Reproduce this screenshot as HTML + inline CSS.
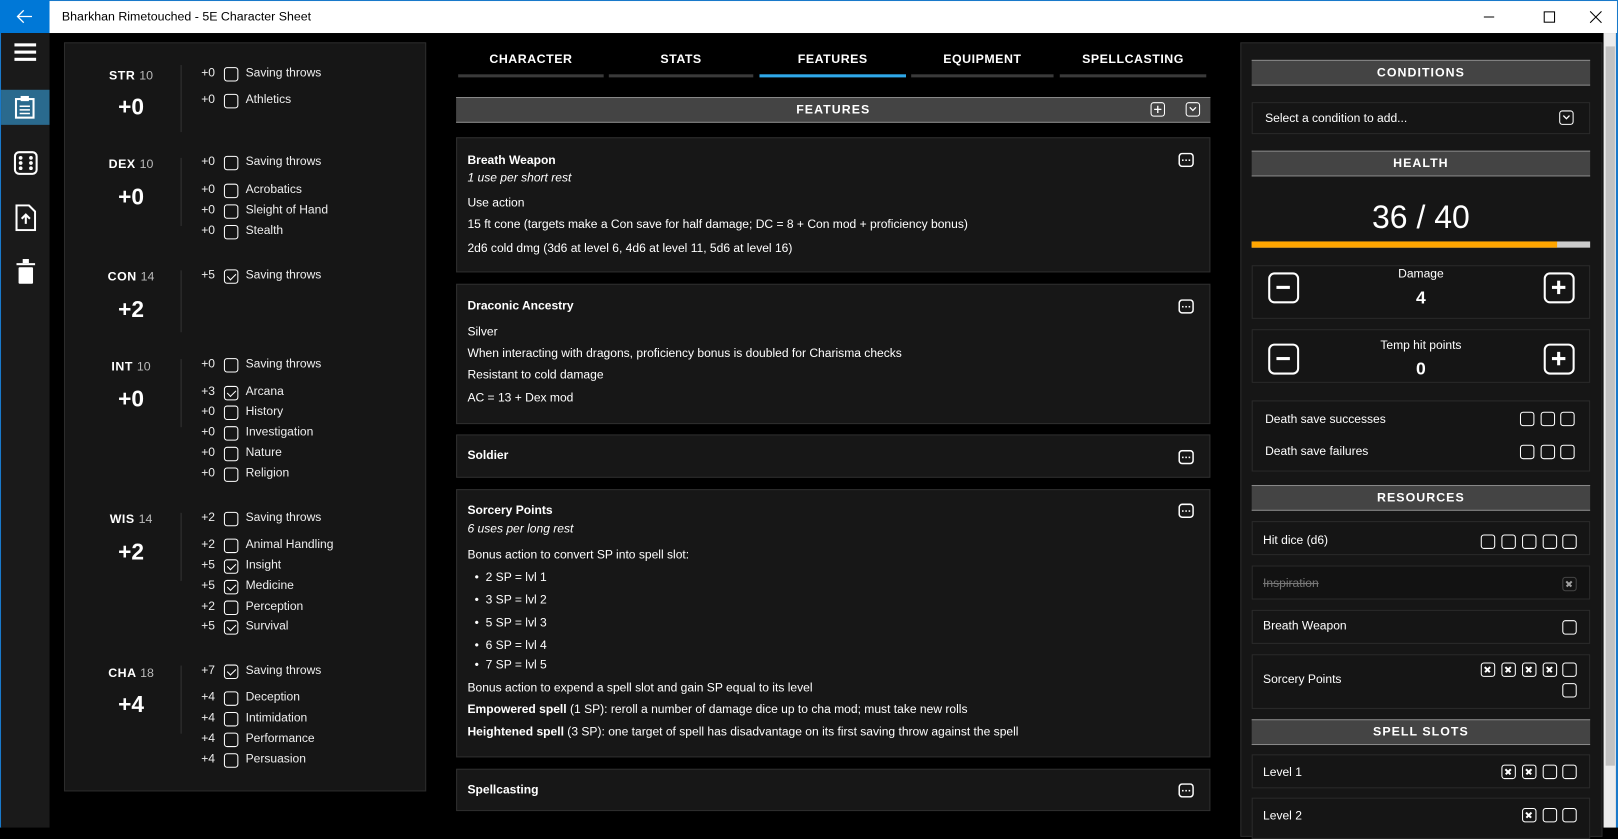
<!DOCTYPE html>
<html><head><meta charset="utf-8"><style>
*{margin:0;padding:0;box-sizing:border-box}
html,body{width:1618px;height:827px;background:#000;overflow:hidden}
#w{position:absolute;left:0;top:0;width:1568px;height:802px;transform:scale(1.03189);transform-origin:0 0;font-family:"Liberation Sans",sans-serif;color:#fff;font-size:11.7px}
.a{position:absolute}
.t{position:absolute;white-space:nowrap;line-height:14px}
.cb{position:absolute;width:14px;height:14px;border:1.5px solid #fff;border-radius:3px}
.cb.c::after{content:"";position:absolute;left:3.5px;top:0.5px;width:3.5px;height:7px;border:solid #fff;border-width:0 1.5px 1.5px 0;transform:rotate(45deg)}
.cb.x::before,.cb.x::after{content:"";position:absolute;left:2px;top:4.7px;width:7px;height:1.5px;background:#fff;transform:rotate(45deg)}
.cb.x::after{transform:rotate(-45deg)}
.panel{position:absolute;background:#161616;border:1px solid #2c2c2c}
.card{position:absolute;background:#171717;border:1px solid #2e2e2e;left:442px;width:731px}
.hdr{position:absolute;background:#444;border-top:1px solid #888;border-bottom:1px solid #888;text-align:center;font-weight:bold;font-size:12px;letter-spacing:1px;line-height:22px}
.box{position:absolute;left:1213px;width:328px;border:1px solid #2a2a2a;background:#151515}
.ab{font-weight:bold;font-size:12px;letter-spacing:.5px;width:100px;left:77px;text-align:center}
.ab span{font-weight:normal;color:#bbb;letter-spacing:0}
.mod{font-size:22px;font-weight:bold;line-height:26px;width:100px;left:77px;text-align:center}
.sk{color:#eee}
.tab{position:absolute;top:50px;text-align:center;font-weight:bold;font-size:12px;letter-spacing:.5px}
.tab i{position:absolute;left:0;right:0;top:22px;height:3px;background:#3a3a3a}
.pm{position:absolute;width:30px;height:30px;border:2.5px solid #fff;border-radius:6px}
.pm::before{content:"";position:absolute;left:6px;top:11px;width:13px;height:3px;background:#fff}
.pm.p::after{content:"";position:absolute;left:11px;top:6px;width:3px;height:13px;background:#fff}
</style></head><body><div id="w">
<div class="a" style="left:0;top:0;width:1568px;height:32px;background:#fff;border:1px solid #1979ca;border-bottom:none"></div>
<div class="a" style="left:0;top:0;width:48px;height:32px;background:#0078d7"></div>
<svg class="a" style="left:16px;top:9px" width="16" height="14"><path d="M1 7H15M7 1L1 7L7 13" stroke="#fff" stroke-width="1.3" fill="none"/></svg>
<div class="t" style="left:60px;top:9px;color:#000;font-size:12px">Bharkhan Rimetouched - 5E Character Sheet</div>
<svg class="a" style="left:1436px;top:10px" width="130" height="14"><path d="M2 6.5H12" stroke="#000"/><rect x="60.5" y="1.5" width="10" height="10" stroke="#000" fill="none"/><path d="M105 1L116 12M116 1L105 12" stroke="#000"/></svg>
<div class="a" style="left:0;top:32px;width:2px;height:770px;background:#1979ca"></div>
<div class="a" style="left:1566px;top:32px;width:2px;height:770px;background:#1979ca"></div>
<div class="a" style="left:1px;top:32px;width:47px;height:770px;background:#1a1a1a"></div>
<div class="a" style="left:14px;top:42px;width:21px;height:3px;background:#fff;box-shadow:0 7px 0 #fff,0 14px 0 #fff"></div>
<div class="a" style="left:1px;top:87px;width:47px;height:34px;background:#2a6a8e"></div>
<svg class="a" style="left:13px;top:92px" width="22" height="24"><rect x="2.5" y="4" width="17" height="18" stroke="#fff" stroke-width="2" fill="none"/><rect x="7" y="1" width="8" height="5" fill="#fff"/><path d="M6 11H16M6 14.5H16M6 18H16" stroke="#fff" stroke-width="1.5"/></svg>
<svg class="a" style="left:13px;top:146px" width="24" height="24"><rect x="1.5" y="1.5" width="21" height="21" rx="4" stroke="#fff" stroke-width="2" fill="none"/><g fill="#fff"><circle cx="7" cy="7" r="1.8"/><circle cx="17" cy="7" r="1.8"/><circle cx="7" cy="12" r="1.8"/><circle cx="17" cy="12" r="1.8"/><circle cx="7" cy="17" r="1.8"/><circle cx="17" cy="17" r="1.8"/></g></svg>
<svg class="a" style="left:15px;top:198px" width="20" height="26"><path d="M1 1H13L19 7V25H1Z" stroke="#fff" stroke-width="2" fill="none"/><path d="M10 19V10M6 14L10 10L14 14" stroke="#fff" stroke-width="2" fill="none"/></svg>
<svg class="a" style="left:14px;top:250px" width="22" height="26"><rect x="2" y="5" width="18" height="2" fill="#fff"/><rect x="8" y="1" width="6" height="4" fill="#fff"/><rect x="4" y="9" width="14" height="16" rx="1" fill="#fff"/></svg>
<div class="panel" style="left:62px;top:41px;width:351px;height:726px"></div>
<div class="a" style="left:175px;top:63px;width:1px;height:65px;background:#333"></div>
<div class="a" style="left:175px;top:153px;width:1px;height:66px;background:#333"></div>
<div class="a" style="left:175px;top:262px;width:1px;height:60px;background:#333"></div>
<div class="a" style="left:175px;top:348px;width:1px;height:66px;background:#333"></div>
<div class="a" style="left:175px;top:497px;width:1px;height:66px;background:#333"></div>
<div class="a" style="left:175px;top:645px;width:1px;height:66px;background:#333"></div>
<div class="t ab" style="top:66px">STR <span>10</span></div><div class="t mod" style="top:91px">+0</div>
<div class="t ab" style="top:152px">DEX <span>10</span></div><div class="t mod" style="top:178px">+0</div>
<div class="t ab" style="top:261px">CON <span>14</span></div><div class="t mod" style="top:287px">+2</div>
<div class="t ab" style="top:348px">INT <span>10</span></div><div class="t mod" style="top:374px">+0</div>
<div class="t ab" style="top:496px">WIS <span>14</span></div><div class="t mod" style="top:522px">+2</div>
<div class="t ab" style="top:645px">CHA <span>18</span></div><div class="t mod" style="top:670px">+4</div>
<div id="sk"></div>
<script>
var S=[[71,'+0',0,'Saving throws'],[97,'+0',0,'Athletics'],[157,'+0',0,'Saving throws'],[184,'+0',0,'Acrobatics'],[204,'+0',0,'Sleight of Hand'],[224,'+0',0,'Stealth'],[267,'+5',1,'Saving throws'],[353,'+0',0,'Saving throws'],[380,'+3',1,'Arcana'],[399,'+0',0,'History'],[419,'+0',0,'Investigation'],[439,'+0',0,'Nature'],[459,'+0',0,'Religion'],[502,'+2',0,'Saving throws'],[528,'+2',0,'Animal Handling'],[548,'+5',1,'Insight'],[568,'+5',1,'Medicine'],[588,'+2',0,'Perception'],[607,'+5',1,'Survival'],[650,'+7',1,'Saving throws'],[676,'+4',0,'Deception'],[696,'+4',0,'Intimidation'],[716,'+4',0,'Performance'],[736,'+4',0,'Persuasion']];
var h='';S.forEach(function(s){h+='<div class="t sk" style="left:195px;top:'+(s[0]-7)+'px">'+s[1]+'</div><div class="cb'+(s[2]?' c':'')+'" style="left:217px;top:'+(s[0]-6)+'px"></div><div class="t sk" style="left:238px;top:'+(s[0]-7)+'px">'+s[3]+'</div>';});
document.getElementById('sk').outerHTML=h;
</script>
<div class="tab" style="left:444px;width:141px">CHARACTER<i></i></div>
<div class="tab" style="left:590px;width:140px">STATS<i></i></div>
<div class="tab" style="left:736px;width:142px">FEATURES<i style="background:#2fa8e8"></i></div>
<div class="tab" style="left:883px;width:138px">EQUIPMENT<i></i></div>
<div class="tab" style="left:1027px;width:142px">SPELLCASTING<i></i></div>
<div class="hdr" style="left:442px;top:94px;width:731px;height:25px">FEATURES</div>
<div class="cb" style="left:1115px;top:99px"></div><svg class="a" style="left:1115px;top:99px" width="14" height="14"><path d="M7 3.5V10.5M3.5 7H10.5" stroke="#fff" stroke-width="1.3"/></svg>
<div class="cb" style="left:1149px;top:99px"></div><svg class="a" style="left:1152px;top:103px" width="8" height="6"><path d="M1 1L4 4L7 1" stroke="#fff" stroke-width="1.3" fill="none"/></svg>
<div class="card" style="top:133px;height:131px"></div>
<div class="t" style="left:453px;top:149px;font-weight:bold">Breath Weapon</div>
<div class="t" style="left:453px;top:166px;font-style:italic">1 use per short rest</div>
<div class="t" style="left:453px;top:190px">Use action</div>
<div class="t" style="left:453px;top:211px">15 ft cone (targets make a Con save for half damage; DC = 8 + Con mod + proficiency bonus)</div>
<div class="t" style="left:453px;top:234px">2d6 cold dmg (3d6 at level 6, 4d6 at level 11, 5d6 at level 16)</div>
<div class="card" style="top:275px;height:136px"></div>
<div class="t" style="left:453px;top:290px;font-weight:bold">Draconic Ancestry</div>
<div class="t" style="left:453px;top:315px">Silver</div>
<div class="t" style="left:453px;top:336px">When interacting with dragons, proficiency bonus is doubled for Charisma checks</div>
<div class="t" style="left:453px;top:357px">Resistant to cold damage</div>
<div class="t" style="left:453px;top:379px">AC = 13 + Dex mod</div>
<div class="card" style="top:421px;height:42px"></div>
<div class="t" style="left:453px;top:435px;font-weight:bold">Soldier</div>
<div class="card" style="top:474px;height:260px"></div>
<div class="t" style="left:453px;top:488px;font-weight:bold">Sorcery Points</div>
<div class="t" style="left:453px;top:506px;font-style:italic">6 uses per long rest</div>
<div class="t" style="left:453px;top:531px">Bonus action to convert SP into spell slot:</div>
<div class="t" style="left:460px;top:553px">•&nbsp; 2 SP = lvl 1</div>
<div class="t" style="left:460px;top:575px">•&nbsp; 3 SP = lvl 2</div>
<div class="t" style="left:460px;top:597px">•&nbsp; 5 SP = lvl 3</div>
<div class="t" style="left:460px;top:619px">•&nbsp; 6 SP = lvl 4</div>
<div class="t" style="left:460px;top:638px">•&nbsp; 7 SP = lvl 5</div>
<div class="t" style="left:453px;top:660px">Bonus action to expend a spell slot and gain SP equal to its level</div>
<div class="t" style="left:453px;top:681px"><b>Empowered spell</b> (1 SP): reroll a number of damage dice up to cha mod; must take new rolls</div>
<div class="t" style="left:453px;top:703px"><b>Heightened spell</b> (3 SP): one target of spell has disadvantage on its first saving throw against the spell</div>
<div class="card" style="top:745px;height:41px"></div>
<div class="t" style="left:453px;top:759px;font-weight:bold">Spellcasting</div>
<div id="el"></div>
<script>
var h='';[148,290,436,488,759].forEach(function(y){h+='<svg class="a" style="left:1142px;top:'+y+'px" width="15" height="14"><rect x="0.75" y="0.75" width="13.5" height="12.5" rx="3" stroke="#fff" stroke-width="1.5" fill="none"/><g fill="#fff"><rect x="3.5" y="6.5" width="1.5" height="1.5"/><rect x="6.7" y="6.5" width="1.5" height="1.5"/><rect x="9.9" y="6.5" width="1.5" height="1.5"/></g></svg>';});
document.getElementById('el').outerHTML=h;
</script>
<div class="panel" style="left:1202px;top:41px;width:351px;height:770px"></div>
<div class="hdr" style="left:1213px;top:58px;width:328px;height:25px">CONDITIONS</div>
<div class="box" style="top:99px;height:31px"></div>
<div class="t" style="left:1226px;top:108px">Select a condition to add...</div>
<div class="cb" style="left:1511px;top:107px"></div><svg class="a" style="left:1514px;top:111px" width="8" height="6"><path d="M1 1L4 4L7 1" stroke="#fff" stroke-width="1.3" fill="none"/></svg>
<div class="hdr" style="left:1213px;top:146px;width:328px;height:25px">HEALTH</div>
<div class="t" style="left:1213px;width:328px;text-align:center;top:194px;font-size:31px;line-height:34px">36 / 40</div>
<div class="a" style="left:1213px;top:234px;width:328px;height:6px;background:#ccc"></div>
<div class="a" style="left:1213px;top:234px;width:296px;height:6px;background:#ffa500"></div>
<div class="box" style="top:257px;height:52px"></div>
<div class="pm" style="left:1229px;top:264px"></div><div class="pm p" style="left:1496px;top:264px"></div>
<div class="t" style="left:1213px;width:328px;text-align:center;top:259px">Damage</div>
<div class="t" style="left:1213px;width:328px;text-align:center;top:280px;font-size:17px;line-height:18px;font-weight:bold">4</div>
<div class="box" style="top:319px;height:52px"></div>
<div class="pm" style="left:1229px;top:333px"></div><div class="pm p" style="left:1496px;top:333px"></div>
<div class="t" style="left:1213px;width:328px;text-align:center;top:328px">Temp hit points</div>
<div class="t" style="left:1213px;width:328px;text-align:center;top:349px;font-size:17px;line-height:18px;font-weight:bold">0</div>
<div class="box" style="top:388px;height:69px"></div>
<div class="t" style="left:1226px;top:400px">Death save successes</div>
<div class="t" style="left:1226px;top:431px">Death save failures</div>
<div class="hdr" style="left:1213px;top:470px;width:328px;height:25px">RESOURCES</div>
<div class="box" style="top:505px;height:33px"></div>
<div class="t" style="left:1224px;top:517px">Hit dice (d6)</div>
<div class="box" style="top:548px;height:33px;background:#121212"></div>
<div class="t" style="left:1224px;top:559px;color:#777;text-decoration:line-through">Inspiration</div>
<div class="box" style="top:591px;height:33px"></div>
<div class="t" style="left:1224px;top:600px">Breath Weapon</div>
<div class="box" style="top:634px;height:53px"></div>
<div class="t" style="left:1224px;top:652px">Sorcery Points</div>
<div class="hdr" style="left:1213px;top:697px;width:328px;height:25px">SPELL SLOTS</div>
<div class="box" style="top:731px;height:33px"></div>
<div class="t" style="left:1224px;top:742px">Level 1</div>
<div class="box" style="top:773px;height:40px"></div>
<div class="t" style="left:1224px;top:784px">Level 2</div>
<div id="rc"></div>
<script>
var R=[[1473,399,''],[1493,399,''],[1512,399,''],[1473,431,''],[1493,431,''],[1512,431,''],
[1435,518,''],[1455,518,''],[1475,518,''],[1495,518,''],[1514,518,''],
[1514,601,''],[1435,642,'x'],[1455,642,'x'],[1475,642,'x'],[1495,642,'x'],[1514,642,''],[1514,662,''],
[1455,741,'x'],[1475,741,'x'],[1495,741,''],[1514,741,''],[1475,783,'x'],[1495,783,''],[1514,783,'']];
var h='';R.forEach(function(r){h+='<div class="cb '+r[2]+'" style="left:'+r[0]+'px;top:'+r[1]+'px"></div>';});
h+='<div class="cb x" style="left:1514px;top:559px;border-color:#666;opacity:.6"></div>';
document.getElementById('rc').outerHTML=h;
</script>
<div class="a" style="left:1554px;top:32px;width:12px;height:770px;background:#ececec"></div>
<div class="a" style="left:1556px;top:45px;width:9px;height:697px;background:#c2c2c2"></div>
</div></body></html>
